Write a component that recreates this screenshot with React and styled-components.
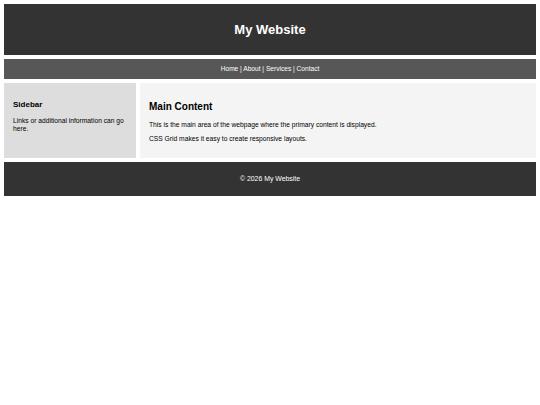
import React from "react"
import styled, { createGlobalStyle } from "styled-components"

const GlobalStyle = createGlobalStyle`
  body {
    margin: 0;
    background: #fff;
    font-family: "Liberation Sans", Arial, sans-serif;
    font-size: 6.7px;
    color: #000;
  }
`

const Page = styled.div`
  display: grid;
  grid-template-columns: 1fr 3fr;
  gap: 4px;
  padding: 4px;
`

const Header = styled.header`
  grid-column: 1 / -1;
  background: #333;
  color: #fff;
  text-align: center;
  padding: 17.5px 0;
`

const Title = styled.h1`
  margin: 0;
  font-size: 13px;
  line-height: 16px;
  font-weight: bold;
`

const Nav = styled.nav`
  grid-column: 1 / -1;
  background: #575757;
  color: #fff;
  text-align: center;
  padding: 6px 0;
  line-height: 8px;
  font-size: 6.6px;
`

const Sidebar = styled.aside`
  background: #dddddd;
  padding: 11px 9px 9px;
`

const SideTitle = styled.h3`
  margin: 6px 0 8px;
  font-size: 8px;
  line-height: 9px;
  font-weight: bold;
`

const Main = styled.main`
  background: #f4f4f4;
  padding: 11px 9px 9px;
`

const MainTitle = styled.h2`
  margin: 7px 0 8px;
  font-size: 10px;
  line-height: 12px;
  font-weight: bold;
`

const Text = styled.p`
  margin: 0 0 6.5px;
  line-height: 7.5px;
`

const Footer = styled.footer`
  grid-column: 1 / -1;
  background: #333;
  color: #fff;
  text-align: center;
  padding: 13px 0;
  line-height: 7.5px;
  font-size: 6.9px;
`

const App = () => {
  return (
    <>
      <GlobalStyle />
      <Page>
        <Header>
          <Title>My Website</Title>
        </Header>
        <Nav>Home | About | Services | Contact</Nav>
        <Sidebar>
          <SideTitle>Sidebar</SideTitle>
          <Text>Links or additional information can go here.</Text>
        </Sidebar>
        <Main>
          <MainTitle>Main Content</MainTitle>
          <Text>This is the main area of the webpage where the primary content is displayed.</Text>
          <Text>CSS Grid makes it easy to create responsive layouts.</Text>
        </Main>
        <Footer>© 2026 My Website</Footer>
      </Page>
    </>
  )
}

export default App
